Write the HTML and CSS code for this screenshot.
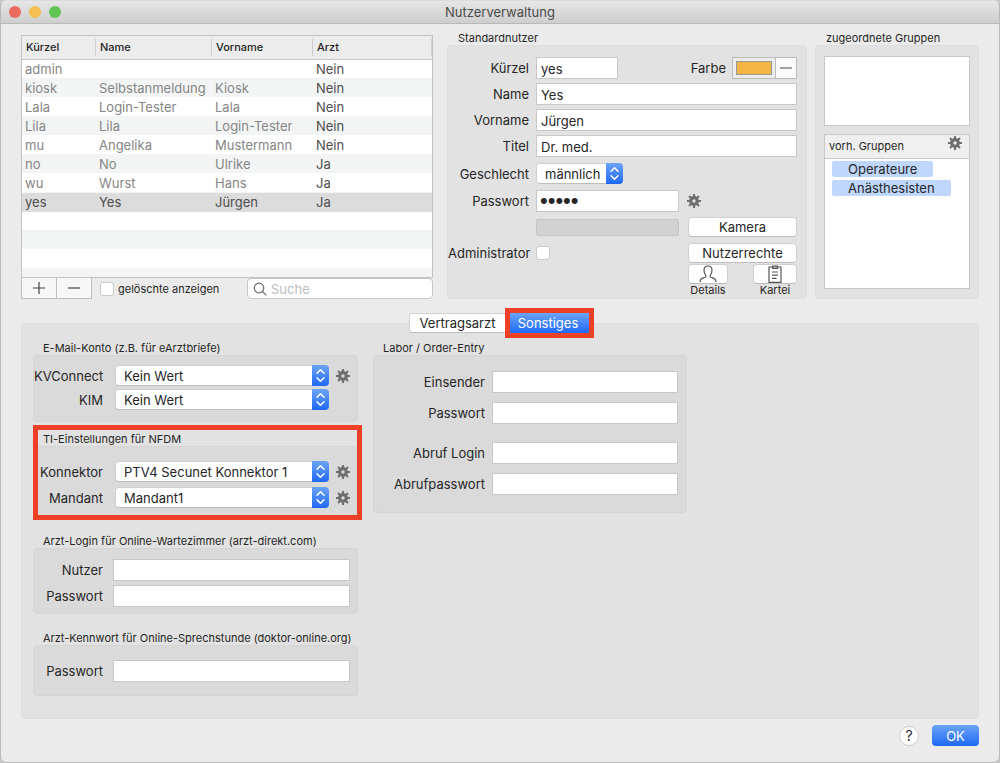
FILE: index.html
```html
<!DOCTYPE html>
<html lang="de">
<head>
<meta charset="utf-8">
<meta name="viewport" content="width=device-width, initial-scale=1">
<title>Nutzerverwaltung</title>
<link rel="stylesheet" href="styles.css">
</head>
<body>
<svg class="sprite" aria-hidden="true">
  <symbol id="gear" viewBox="0 0 16 16">
    <circle cx="8" cy="8" r="3.3" fill="none" stroke="currentColor" stroke-width="3.2"/>
    <g stroke="currentColor" stroke-width="2.1">
      <path d="M8 1v3M8 12v3M1 8h3M12 8h3M3.05 3.05l2.1 2.1M10.85 10.85l2.1 2.1M12.95 3.05l-2.1 2.1M5.15 10.85l-2.1 2.1"/>
    </g>
  </symbol>
  <symbol id="updown" viewBox="0 0 16 20">
    <path d="M4.7 7.8L8 4.5l3.3 3.3M4.7 12.2L8 15.5l3.3-3.3" fill="none" stroke="#fff" stroke-width="1.5" stroke-linecap="round" stroke-linejoin="round"/>
  </symbol>
</svg>
<div class="window">
  <header class="titlebar">
    <div class="lights">
      <button class="light close" aria-label="Schließen"></button>
      <button class="light minimize" aria-label="Minimieren"></button>
      <button class="light maximize" aria-label="Maximieren"></button>
    </div>
    <h1>Nutzerverwaltung</h1>
  </header>

  <main class="content">
    <div class="top">
      <section class="users">
        <div class="table-box">
          <table class="user-table">
            <colgroup><col class="col-id"><col class="col-name"><col class="col-first"><col></colgroup>
            <thead><tr><th>Kürzel</th><th>Name</th><th>Vorname</th><th>Arzt</th></tr></thead>
            <tbody>
              <tr><td>admin</td><td></td><td></td><td>Nein</td></tr>
              <tr><td>kiosk</td><td>Selbstanmeldung</td><td>Kiosk</td><td>Nein</td></tr>
              <tr><td>Lala</td><td>Login-Tester</td><td>Lala</td><td>Nein</td></tr>
              <tr><td>Lila</td><td>Lila</td><td>Login-Tester</td><td>Nein</td></tr>
              <tr><td>mu</td><td>Angelika</td><td>Mustermann</td><td>Nein</td></tr>
              <tr><td>no</td><td>No</td><td>Ulrike</td><td>Ja</td></tr>
              <tr><td>wu</td><td>Wurst</td><td>Hans</td><td>Ja</td></tr>
              <tr class="selected"><td>yes</td><td>Yes</td><td>Jürgen</td><td>Ja</td></tr>
            </tbody>
          </table>
        </div>
        <div class="table-tools">
          <div class="add-remove">
            <button aria-label="Hinzufügen"><svg viewBox="0 0 12 12"><path d="M0 6h12M6 0v12"/></svg></button>
            <button aria-label="Entfernen"><svg viewBox="0 0 12 12"><path d="M0 6h12"/></svg></button>
          </div>
          <label class="deleted"><input type="checkbox" class="check">gelöschte anzeigen</label>
          <div class="search">
            <svg viewBox="0 0 14 14"><circle cx="6" cy="6" r="4.8"/><path d="M9.5 9.5l3.8 3.8"/></svg>
            <input type="search" placeholder="Suche" aria-label="Suche">
          </div>
        </div>
      </section>

      <section class="group">
        <h2>Standardnutzer</h2>
        <div class="box user-form">
          <label for="kuerzel">Kürzel</label>
          <div class="split-ends">
            <input id="kuerzel" class="field short" value="yes">
            <div class="color">
              <span>Farbe</span>
              <div class="color-control">
                <button class="swatch" aria-label="Farbe wählen"><span></span></button>
                <button class="clear" aria-label="Farbe entfernen"><svg viewBox="0 0 12 12"><path d="M0 6h12"/></svg></button>
              </div>
            </div>
          </div>
          <label for="name">Name</label><input id="name" class="field" value="Yes">
          <label for="vorname">Vorname</label><input id="vorname" class="field" value="Jürgen">
          <label for="titel">Titel</label><input id="titel" class="field" value="Dr. med.">
          <label for="geschlecht">Geschlecht</label>
          <div class="select-row">
            <div class="popup popup-small"><select id="geschlecht"><option>männlich</option></select><svg><use href="#updown"/></svg></div>
          </div>
          <label for="pw">Passwort</label>
          <div class="with-action"><input id="pw" class="field password" type="password" value="yesyy"><button class="gear" aria-label="Passwortoptionen"><svg><use href="#gear"/></svg></button></div>
          <div class="with-action second"><div class="meter"></div><button class="push">Kamera</button></div>
          <label for="admin">Administrator</label>
          <div class="with-action"><input id="admin" type="checkbox" class="check"><button class="push">Nutzerrechte</button></div>
          <div class="icon-actions">
            <label class="icon-action"><button class="push icon details" aria-label="Details"><svg viewBox="0 0 18 18"><path d="M1 17c0-3 1.4-3.6 4-4.3 1.8-.5 2.300-1.300 1.700-2.400C5.400 8.400 5 7 5 5.200C5 2.600 6.700 1 9 1s4 1.600 4 4.200c0 1.800-.4 3.200-1.700 5.100-.6 1.100-.1 1.900 1.700 2.400 2.600.7 4 1.300 4 4.300"/></svg></button><span>Details</span></label>
            <label class="icon-action"><button class="push icon card" aria-label="Kartei"><svg viewBox="0 0 18 18"><path d="M3 2h12v15.300H3z"/><path d="M6 1h6M6.500 1v2.500h5V1M6 7h6M6 10.200h6M6 13.300h4.500"/></svg></button><span>Kartei</span></label>
          </div>
        </div>
      </section>

      <section class="group">
        <h2>zugeordnete Gruppen</h2>
        <div class="box groups">
          <div class="assigned"></div>
          <div class="available">
            <div class="available-head"><span>vorh. Gruppen</span><button class="gear" aria-label="Gruppenoptionen"><svg><use href="#gear"/></svg></button></div>
            <ul><li>Operateure</li><li>Anästhesisten</li></ul>
          </div>
        </div>
      </section>
    </div>

    <div class="tabs" role="tablist">
      <button role="tab" aria-selected="false">Vertragsarzt</button><button role="tab" aria-selected="true" class="active">Sonstiges</button>
    </div>

    <div class="panel">
      <div class="left-groups">
        <section class="group mail">
          <h2>E-Mail-Konto (z.B. für eArztbriefe)</h2>
          <div class="box">
            <div class="popup-row"><label for="kv">KVConnect</label><div class="popup"><select id="kv"><option>Kein Wert</option></select><svg><use href="#updown"/></svg></div><button class="gear" aria-label="KVConnect Optionen"><svg><use href="#gear"/></svg></button></div>
            <div class="popup-row"><label for="kim">KIM</label><div class="popup"><select id="kim"><option>Kein Wert</option></select><svg><use href="#updown"/></svg></div></div>
          </div>
        </section>
        <section class="group ti marked">
          <h2>TI-Einstellungen für NFDM</h2>
          <div class="box">
            <div class="popup-row"><label for="konnektor">Konnektor</label><div class="popup"><select id="konnektor"><option>PTV4 Secunet Konnektor 1</option></select><svg><use href="#updown"/></svg></div><button class="gear" aria-label="Konnektor Optionen"><svg><use href="#gear"/></svg></button></div>
            <div class="popup-row"><label for="mandant">Mandant</label><div class="popup"><select id="mandant"><option>Mandant1</option></select><svg><use href="#updown"/></svg></div><button class="gear" aria-label="Mandant Optionen"><svg><use href="#gear"/></svg></button></div>
          </div>
        </section>
        <section class="group login">
          <h2>Arzt-Login für Online-Wartezimmer (arzt-direkt.com)</h2>
          <div class="box">
            <div class="field-row"><label for="wz-user">Nutzer</label><input id="wz-user" class="field"></div>
            <div class="field-row"><label for="wz-pw">Passwort</label><input id="wz-pw" class="field" type="password"></div>
          </div>
        </section>
        <section class="group consult">
          <h2>Arzt-Kennwort für Online-Sprechstunde (doktor-online.org)</h2>
          <div class="box">
            <div class="field-row"><label for="sp-pw">Passwort</label><input id="sp-pw" class="field" type="password"></div>
          </div>
        </section>
      </div>
      <section class="group lab">
        <h2>Labor / Order-Entry</h2>
        <div class="box">
          <label for="einsender">Einsender</label><input id="einsender" class="field">
          <label for="lab-pw">Passwort</label><input id="lab-pw" class="field" type="password">
          <label for="abruf" class="spaced">Abruf Login</label><input id="abruf" class="field spaced">
          <label for="abruf-pw">Abrufpasswort</label><input id="abruf-pw" class="field" type="password">
        </div>
      </section>
    </div>

    <footer class="footer">
      <button class="help" aria-label="Hilfe">?</button>
      <button class="ok">OK</button>
    </footer>
  </main>
</div>
</body>
</html>
```

FILE: styles.css
```css
* { box-sizing: border-box; }

body {
  margin: 0;
  background: #c8c8c8;
  color: #262626;
  font: 13px/16px Inter, "Liberation Sans", sans-serif;
}

button, input, select { margin: 0; font: inherit; color: inherit; }
button { padding: 0; border: 0; background: none; }
h1, h2, ul { margin: 0; padding: 0; font-weight: 400; }
svg { display: block; }
.sprite { position: absolute; width: 0; height: 0; }

.window {
  display: flex;
  flex-direction: column;
  min-height: 100vh;
  border: 1px solid #b9b9b9;
  border-top-color: #dcdcdc;
  border-radius: 6px;
  background: #ebebeb;
  overflow: hidden;
}

/* Title bar */
.titlebar {
  display: grid;
  grid-template-columns: 1fr auto 1fr;
  align-items: center;
  height: 23px;
  padding: 0 8px;
  background: linear-gradient(#e6e6e6, #cecece);
  border-bottom: 1px solid #b9b9b9;
}
.titlebar h1 { font-size: 13px; color: #4a4a4a; }
.lights { display: flex; gap: 8px; }
.light { width: 12px; height: 12px; border-radius: 50%; }
.close { background: #ed6a5f; }
.minimize { background: #f5bf4f; }
.maximize { background: #61c554; }

.content {
  display: flex;
  flex-direction: column;
  flex: 1;
  padding: 8px 20px 0;
}

.top {
  display: grid;
  grid-template-columns: minmax(0, 1fr) 360px 164px;
  gap: 8px;
}

/* User list */
.users { display: flex; flex-direction: column; padding: 3px 6px 0 0; }
.table-box {
  flex: 1;
  border: 1px solid #c3c3c3;
  background: repeating-linear-gradient(#fff 0 19px, #f3f5f5 19px 38px) 0 23px;
}
.user-table { width: 100%; border-collapse: collapse; table-layout: fixed; }
.col-id { width: 74px; }
.col-name { width: 116px; }
.col-first { width: 101px; }
.user-table th {
  height: 23px;
  padding: 0 4px;
  border-bottom: 1px solid #c6c6c6;
  background: linear-gradient(#cfcfcf, #cfcfcf) right center / 1px 17px no-repeat #ececec;
  font-size: 11px;
  font-weight: 500;
  text-align: left;
}
.user-table td {
  height: 19px;
  padding: 0 3px;
  color: #858585;
  line-height: 19px;
  white-space: nowrap;
}
.user-table td:last-child, .user-table .selected td { color: #4d4d4d; }
.user-table .selected { background: #dcdcdc; }

.table-tools { display: flex; align-items: center; height: 21px; }
.add-remove { display: flex; }
.add-remove button {
  display: grid;
  place-items: center;
  width: 36px;
  height: 21px;
  border: 1px solid #bdbdbd;
  border-top: 0;
  background: #f7f7f7;
}
.add-remove button + button { margin-left: -1px; }
.add-remove svg, .clear svg { width: 12px; height: 12px; stroke: #444; stroke-width: 1.2; }
.deleted { display: flex; align-items: center; gap: 4px; margin-left: 8px; font-size: 11px; }
.check {
  appearance: none;
  width: 14px;
  height: 14px;
  border: 1px solid #c9c9c9;
  border-radius: 3px;
  background: #fff;
}
.search {
  display: flex;
  align-items: center;
  gap: 4px;
  width: 186px;
  height: 21px;
  margin-left: auto;
  padding: 0 5px;
  border: 1px solid #c6c6c6;
  border-radius: 4px;
  background: #fff;
}
.search svg { flex: none; width: 14px; height: 14px; fill: none; stroke: #6a6a6a; stroke-width: 1.2; }
.search input { flex: 1; min-width: 0; padding: 0; border: 0; background: none; outline: 0; }
.search input::placeholder { color: #bdbdbd; }

/* Titled groups */
.group { display: flex; flex-direction: column; }
.group h2 { padding-left: 11px; font-size: 11px; line-height: 13px; white-space: nowrap; }
.box { flex: 1; border: 1px solid #dedede; border-radius: 4px; background: #e2e2e2; }

.field {
  width: 100%;
  min-width: 0;
  height: 22px;
  padding: 1px 4px 0;
  border: 1px solid #c8c8c8;
  border-radius: 0;
  background: #fff;
  color: #262626;
}
.field.short { width: 82px; }
.field.password { padding: 0 3px; font-family: "Liberation Sans", sans-serif; font-size: 22px; }

/* User form */
.user-form {
  display: grid;
  grid-template-columns: 81px minmax(0, 1fr);
  gap: 4px 7px;
  align-items: center;
  align-content: start;
  padding: 11px 9px 1px 0;
}
.user-form > label { text-align: right; }
.split-ends, .color { display: flex; justify-content: space-between; align-items: center; }
.color { gap: 6px; }
.color-control { display: flex; height: 22px; border: 1px solid #bcbcbc; background: #fafafa; }
.swatch { width: 43px; padding: 3px; background: #ededed; border-right: 1px solid #bcbcbc; }
.swatch span { display: block; height: 14px; border: 1px solid #999; background: #f4b544; }
.clear { display: grid; place-items: center; width: 20px; }
.select-row { display: flex; align-items: center; height: 25px; }
.with-action {
  display: grid;
  grid-template-columns: minmax(0, 1fr) 109px;
  gap: 9px;
  align-items: center;
  height: 22px;
}
.second, .icon-actions { grid-column: 2; }
.meter { height: 17px; border: 1px solid #c6c6c6; border-radius: 2px; background: #d2d2d2; }
.push {
  height: 20px;
  border: 1px solid #d0d0d0;
  border-bottom-color: #bdbdbd;
  border-radius: 4px;
  background: #fff;
}
.icon-actions { display: flex; justify-content: space-between; width: 109px; margin: -4px 0 0 auto; }
.icon-action { display: flex; flex-direction: column; align-items: center; font-size: 11px; line-height: 13px; }
.icon { display: grid; place-items: center; }
.details { width: 40px; }
.card { width: 44px; }
.icon svg { width: 18px; height: 18px; fill: none; stroke: #555; stroke-width: 1.2; }

.gear { width: 16px; height: 16px; color: #6e6e6e; }
.gear svg { width: 16px; height: 16px; }
.with-action .gear { margin-left: -2px; }

/* Pop-up menus */
.popup { position: relative; flex: 1; height: 21px; }
.popup-small { flex: none; width: 87px; }
.popup select {
  appearance: none;
  width: 100%;
  height: 21px;
  padding: 0 20px 0 8px;
  border: 1px solid #d0d0d0;
  border-bottom-color: #bdbdbd;
  border-radius: 4px;
  background: #fff;
}
.popup svg {
  position: absolute;
  top: 0;
  right: 0;
  width: 17px;
  height: 21px;
  border-radius: 0 4px 4px 0;
  background: linear-gradient(#6ba4f9, #1f68f5);
  pointer-events: none;
}

/* Group lists */
.groups { display: flex; flex-direction: column; gap: 8px; padding: 10px 8px 9px; }
.assigned { height: 70px; border: 1px solid #c8c8c8; background: #fff; }
.available { flex: 1; border: 1px solid #c8c8c8; background: #fff; }
.available-head {
  display: flex;
  justify-content: space-between;
  height: 24px;
  padding: 0 6px 0 4px;
  border-bottom: 1px solid #c8c8c8;
  background: #efefef;
  font-size: 11px;
  line-height: 23px;
}
.available ul { display: flex; flex-direction: column; align-items: flex-start; gap: 3px; padding: 2px 7px; list-style: none; }
.available li { padding: 0 16px; border-radius: 2px; background: #bfd7fd; }

/* Tabs */
.tabs { position: relative; z-index: 1; display: flex; justify-content: center; height: 20px; margin: 14px 0 -10px; }
.tabs button {
  width: 96px;
  border: 1px solid #d0d0d0;
  border-bottom-color: #bdbdbd;
  border-right: 0;
  border-radius: 4px 0 0 4px;
  background: #fff;
}
.tabs .active {
  position: relative;
  width: 86px;
  border: 0;
  border-radius: 0 4px 4px 0;
  background: linear-gradient(#6ba4f9, #1f68f5);
  color: #fff;
}
.tabs .active::after, .marked::after {
  content: "";
  position: absolute;
  border: 5px solid #ee4026;
  pointer-events: none;
}
.tabs .active::after { inset: -5px -3px -5px 0; }

/* Settings panel */
.panel {
  display: flex;
  align-items: flex-start;
  gap: 15px;
  flex: 1;
  padding: 18px 11px 22px;
  border: 1px solid #dedede;
  border-radius: 4px;
  background: #e2e2e2;
}
.left-groups { display: flex; flex-direction: column; width: 325px; }
.panel .box { background: #dadada; border-color: #d5d5d5; }
.panel .group h2 { padding-left: 10px; }
.left-groups .popup-row, .left-groups .field-row { display: flex; align-items: center; }
.popup-row label, .field-row label { flex: none; width: 69px; text-align: right; white-space: nowrap; }
.popup-row { gap: 12px; padding-right: 28px; }
.popup-row .gear { margin: 0 -22px 0 -6px; }
.field-row { gap: 10px; padding-right: 7px; }
.left-groups .box { display: flex; flex-direction: column; }
.mail .box { gap: 3px; padding: 9px 0 11px; }
.ti { position: relative; margin-top: 11px; }
.ti .box { gap: 5px; padding: 14px 0 8px; }
.marked::after { inset: -8px -4px -3px 0; }
.login { margin-top: 18px; }
.login .box { gap: 4px; padding: 10px 0 6px; }
.consult { margin-top: 18px; }
.consult .box { padding: 14px 0 13px; }

.lab { width: 314px; }
.lab .box {
  display: grid;
  grid-template-columns: 111px minmax(0, 1fr);
  gap: 9px 7px;
  align-items: center;
  padding: 15px 8px 17px 0;
}
.lab label { text-align: right; }
.lab .spaced { margin-top: 9px; }

/* Footer */
.footer { display: flex; justify-content: flex-end; align-items: center; gap: 13px; height: 43px; padding-bottom: 10px; }
.help {
  width: 20px;
  height: 20px;
  border: 1px solid #cdcdcd;
  border-radius: 50%;
  background: #fff;
  font-size: 14px;
  line-height: 18px;
}
.ok { width: 47px; height: 21px; border-radius: 4px; background: linear-gradient(#6ba4f9, #1f68f5); color: #fff; }
```
